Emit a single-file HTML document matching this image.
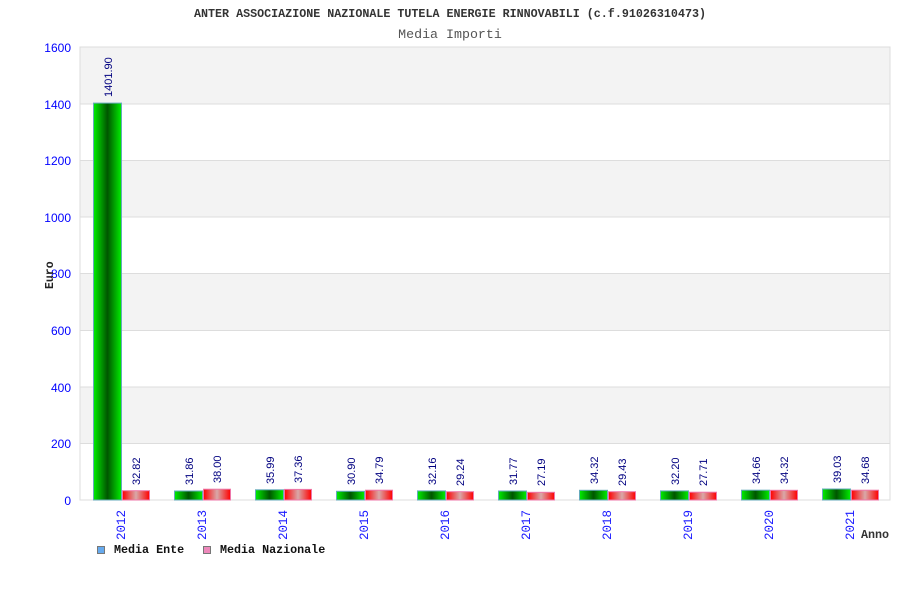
<!DOCTYPE html>
<html><head><meta charset="utf-8"><style>body{margin:0;background:#fff}svg{display:block}</style></head><body>
<svg width="900" height="600" xmlns="http://www.w3.org/2000/svg">
<defs>
<linearGradient id="g" x1="0" x2="1" y1="0" y2="0"><stop offset="0" stop-color="#00ee00"/><stop offset="0.5" stop-color="#005500"/><stop offset="1" stop-color="#00ee00"/></linearGradient>
<linearGradient id="r" x1="0" x2="1" y1="0" y2="0"><stop offset="0" stop-color="#ff0000"/><stop offset="0.5" stop-color="#d8a8a8"/><stop offset="1" stop-color="#ff0000"/></linearGradient>
</defs>
<text x="450" y="17" text-anchor="middle" font-family="Liberation Mono, monospace" font-size="11.7" font-weight="bold" fill="#333">ANTER ASSOCIAZIONE NAZIONALE TUTELA ENERGIE RINNOVABILI (c.f.91026310473)</text>
<text x="450" y="38" text-anchor="middle" font-family="Liberation Mono, monospace" font-size="13.3" fill="#555">Media Importi</text>
<rect x="80" y="47" width="810" height="453" fill="#fff" stroke="#ddd"/>
<rect x="80.5" y="47.5" width="809" height="56.6" fill="#f3f3f3"/>
<rect x="80.5" y="160.8" width="809" height="56.6" fill="#f3f3f3"/>
<rect x="80.5" y="274" width="809" height="56.6" fill="#f3f3f3"/>
<rect x="80.5" y="387.3" width="809" height="56.6" fill="#f3f3f3"/>
<g stroke="#ddd"><line x1="80" x2="890" y1="104" y2="104"/><line x1="80" x2="890" y1="160.5" y2="160.5"/><line x1="80" x2="890" y1="217" y2="217"/><line x1="80" x2="890" y1="273.5" y2="273.5"/><line x1="80" x2="890" y1="330.5" y2="330.5"/><line x1="80" x2="890" y1="387" y2="387"/><line x1="80" x2="890" y1="443.5" y2="443.5"/><line x1="80" x2="890" y1="500" y2="500"/></g>
<g font-family="Liberation Sans, sans-serif" font-size="12" fill="#0000ff" text-anchor="end">
<text x="71" y="52">1600</text><text x="71" y="109">1400</text><text x="71" y="165">1200</text><text x="71" y="222">1000</text><text x="71" y="278">800</text><text x="71" y="335">600</text><text x="71" y="392">400</text><text x="71" y="448">200</text><text x="71" y="505">0</text>
</g>
<text transform="translate(53,289) rotate(-90)" font-family="Liberation Mono, monospace" font-size="11.5" font-weight="bold" fill="#222">Euro</text>
<g stroke-width="1">
<rect x="93.5" y="103.1" width="28" height="396.9" fill="url(#g)" stroke="#6ab"/><rect x="122.5" y="490.7" width="27" height="9.3" fill="url(#r)" stroke="#e7a"/>
<rect x="174.5" y="491" width="28" height="9" fill="url(#g)" stroke="#6ab"/><rect x="203.5" y="489.2" width="27" height="10.8" fill="url(#r)" stroke="#e7a"/>
<rect x="255.5" y="489.8" width="28" height="10.2" fill="url(#g)" stroke="#6ab"/><rect x="284.5" y="489.4" width="27" height="10.6" fill="url(#r)" stroke="#e7a"/>
<rect x="336.5" y="491.3" width="28" height="8.7" fill="url(#g)" stroke="#6ab"/><rect x="365.5" y="490.2" width="27" height="9.8" fill="url(#r)" stroke="#e7a"/>
<rect x="417.5" y="490.9" width="28" height="9.1" fill="url(#g)" stroke="#6ab"/><rect x="446.5" y="491.7" width="27" height="8.3" fill="url(#r)" stroke="#e7a"/>
<rect x="498.5" y="491" width="28" height="9" fill="url(#g)" stroke="#6ab"/><rect x="527.5" y="492.3" width="27" height="7.7" fill="url(#r)" stroke="#e7a"/>
<rect x="579.5" y="490.3" width="28" height="9.7" fill="url(#g)" stroke="#6ab"/><rect x="608.5" y="491.7" width="27" height="8.3" fill="url(#r)" stroke="#e7a"/>
<rect x="660.5" y="490.9" width="28" height="9.1" fill="url(#g)" stroke="#6ab"/><rect x="689.5" y="492.2" width="27" height="7.8" fill="url(#r)" stroke="#e7a"/>
<rect x="741.5" y="490.2" width="28" height="9.8" fill="url(#g)" stroke="#6ab"/><rect x="770.5" y="490.3" width="27" height="9.7" fill="url(#r)" stroke="#e7a"/>
<rect x="822.5" y="489" width="28" height="11" fill="url(#g)" stroke="#6ab"/><rect x="851.5" y="490.2" width="27" height="9.8" fill="url(#r)" stroke="#e7a"/>
</g>
<g font-family="Liberation Sans, sans-serif" font-size="11" fill="#000080">
<text transform="translate(112,97) rotate(-90)">1401.90</text><text transform="translate(140,485) rotate(-90)">32.82</text>
<text transform="translate(193,485) rotate(-90)">31.86</text><text transform="translate(221,483) rotate(-90)">38.00</text>
<text transform="translate(274,484) rotate(-90)">35.99</text><text transform="translate(302,483) rotate(-90)">37.36</text>
<text transform="translate(355,485) rotate(-90)">30.90</text><text transform="translate(383,484) rotate(-90)">34.79</text>
<text transform="translate(436,485) rotate(-90)">32.16</text><text transform="translate(464,486) rotate(-90)">29.24</text>
<text transform="translate(517,485) rotate(-90)">31.77</text><text transform="translate(545,486) rotate(-90)">27.19</text>
<text transform="translate(598,484) rotate(-90)">34.32</text><text transform="translate(626,486) rotate(-90)">29.43</text>
<text transform="translate(679,485) rotate(-90)">32.20</text><text transform="translate(707,486) rotate(-90)">27.71</text>
<text transform="translate(760,484) rotate(-90)">34.66</text><text transform="translate(788,484) rotate(-90)">34.32</text>
<text transform="translate(841,483) rotate(-90)">39.03</text><text transform="translate(869,484) rotate(-90)">34.68</text>
</g>
<g font-family="Liberation Mono, monospace" font-size="12.5" fill="#1a1aff" text-anchor="end">
<text transform="translate(125,510) rotate(-90)">2012</text><text transform="translate(206,510) rotate(-90)">2013</text><text transform="translate(287,510) rotate(-90)">2014</text><text transform="translate(368,510) rotate(-90)">2015</text><text transform="translate(449,510) rotate(-90)">2016</text><text transform="translate(530,510) rotate(-90)">2017</text><text transform="translate(611,510) rotate(-90)">2018</text><text transform="translate(692,510) rotate(-90)">2019</text><text transform="translate(773,510) rotate(-90)">2020</text><text transform="translate(854,510) rotate(-90)">2021</text>
</g>
<text x="889" y="538" text-anchor="end" font-family="Liberation Mono, monospace" font-size="11.7" font-weight="bold" fill="#333">Anno</text>
<rect x="97.5" y="546.5" width="7" height="7" fill="#66aaee" stroke="#777"/>
<text x="114" y="553" font-family="Liberation Mono, monospace" font-size="11.7" font-weight="bold" fill="#111">Media Ente</text>
<rect x="203.5" y="546.5" width="7" height="7" fill="#ee88bb" stroke="#777"/>
<text x="220" y="553" font-family="Liberation Mono, monospace" font-size="11.7" font-weight="bold" fill="#111">Media Nazionale</text>
</svg>
</body></html>
